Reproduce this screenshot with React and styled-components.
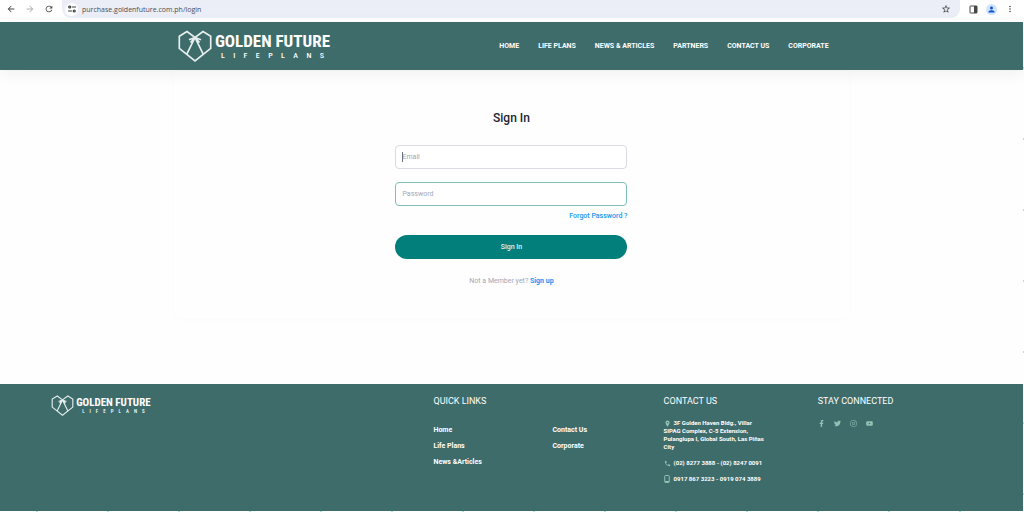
import React from 'react';
import styled, { createGlobalStyle } from 'styled-components';
import {
  MdArrowBack,
  MdArrowForward,
  MdRefresh,
  MdStarBorder,
  MdMoreVert,
  MdPerson,
  MdPhone,
  MdLocationOn,
} from 'react-icons/md';
import { FaFacebookF, FaTwitter, FaInstagram, FaYoutube } from 'react-icons/fa';

const navItems = ['Home', 'Life Plans', 'News & Articles', 'Partners', 'Contact Us', 'Corporate'];
const linkColumns = [
  ['Home', 'Life Plans', 'News &Articles'],
  ['Contact Us', 'Corporate'],
];
const socials = [
  { name: 'Facebook', Icon: FaFacebookF },
  { name: 'Twitter', Icon: FaTwitter },
  { name: 'Instagram', Icon: FaInstagram },
  { name: 'YouTube', Icon: FaYoutube },
];

const TuneIcon = () => (
  <svg width="8" height="8" viewBox="0 0 16 16" fill="none" stroke="#3c4043" strokeWidth="2.4">
    <circle cx="3.5" cy="4" r="2" />
    <path d="M8 4h8M0 12h8" />
    <circle cx="12.5" cy="12" r="2" />
  </svg>
);

const PanelIcon = () => (
  <svg width="9" height="9" viewBox="0 0 18 18">
    <rect x="2" y="2" width="14" height="14" rx="1" fill="none" stroke="#474747" strokeWidth="2" />
    <path d="M10 2h6v14h-6z" fill="#474747" />
  </svg>
);

const MobileIcon = () => (
  <svg width="6" height="8" viewBox="0 0 12 16" fill="none" stroke="currentColor" strokeWidth="2">
    <rect x="1.5" y="1" width="9" height="14" rx="1.5" />
    <path d="M2 13h8" />
  </svg>
);

const Logo = ({ small }) => (
  <LogoLink href="#home" aria-label="Golden Future Lifeplans" $small={small}>
    <LogoMark viewBox="0 0 34 32" $small={small}>
      <path d="M9 1.5 1.3 6.2v12.2L17 30.8l15.7-12.4V6.2L25 1.5l-8 6-8-6Z" />
      <path d="M17 7.5 8.8 24.2M17 7.5l8.2 16.7M17 7.5l-6 2.3M17 7.5l6 2.3M17 7.5l-4.5 5M17 7.5l4.5 5" />
    </LogoMark>
    <LogoWords $small={small}>
      <LogoName $small={small}>GOLDEN FUTURE</LogoName>
      <LogoSub $small={small}>
        {'LIFEPLANS'.split('').map((letter, i) => (
          <span key={i}>{letter}</span>
        ))}
      </LogoSub>
    </LogoWords>
  </LogoLink>
);

const App = () => {
  return (
    <>
      <GlobalStyle />
      <Page>
        <BrowserBar>
          <BarButton aria-label="Back"><MdArrowBack /></BarButton>
          <BarButton aria-label="Forward" $faded><MdArrowForward /></BarButton>
          <BarButton aria-label="Reload"><MdRefresh /></BarButton>
          <AddressBar>
            <SiteInfo aria-label="Site information"><TuneIcon /></SiteInfo>
            <Address aria-label="Address" defaultValue="purchase.goldenfuture.com.ph/login" />
            <BarButton aria-label="Bookmark"><MdStarBorder /></BarButton>
          </AddressBar>
          <BarButton aria-label="Side panel"><PanelIcon /></BarButton>
          <Avatar aria-label="Profile"><MdPerson /></Avatar>
          <BarButton aria-label="Menu"><MdMoreVert /></BarButton>
        </BrowserBar>

        <Header>
          <Logo />
          <Nav>
            {navItems.map((item) => (
              <NavLink key={item} href="#nav">{item}</NavLink>
            ))}
          </Nav>
        </Header>

        <Main>
          <Card>
            <Form onSubmit={(e) => e.preventDefault()}>
              <Title>Sign In</Title>
              <Field $caret>
                <Input type="email" placeholder="Email" aria-label="Email" />
              </Field>
              <Field>
                <Input type="password" placeholder="Password" aria-label="Password" $active />
              </Field>
              <Forgot href="#forgot">Forgot Password ?</Forgot>
              <Submit type="submit">Sign In</Submit>
              <SignUp>
                Not a Member yet? <BlueLink href="#signup">Sign up</BlueLink>
              </SignUp>
            </Form>
          </Card>
        </Main>

        <Footer>
          <Logo small />
          <section>
            <FooterTitle>QUICK LINKS</FooterTitle>
            <LinkColumns>
              {linkColumns.map((links) => (
                <LinkList key={links[0]}>
                  {links.map((link) => (
                    <li key={link}><FooterLink href="#link">{link}</FooterLink></li>
                  ))}
                </LinkList>
              ))}
            </LinkColumns>
          </section>
          <section>
            <FooterTitle>CONTACT US</FooterTitle>
            <ContactText>
              <ContactIcon><MdLocationOn /></ContactIcon>
              3F Golden Haven Bldg., Villar<br />
              SIPAG Complex, C-5 Extension,<br />
              Pulanglupa I, Global South, Las Piñas<br />
              City
            </ContactText>
            <ContactText>
              <ContactIcon><MdPhone /></ContactIcon>
              (02) 8277 3888 - (02) 8247 0091
            </ContactText>
            <ContactText>
              <ContactIcon><MobileIcon /></ContactIcon>
              0917 867 3223 - 0919 074 3889
            </ContactText>
          </section>
          <section>
            <FooterTitle>STAY CONNECTED</FooterTitle>
            <Socials>
              {socials.map(({ name, Icon }) => (
                <a key={name} href="#social" aria-label={name}><Icon /></a>
              ))}
            </Socials>
          </section>
        </Footer>
      </Page>
    </>
  );
};

const GlobalStyle = createGlobalStyle`
  * {
    box-sizing: border-box;
  }
  body {
    margin: 0;
    background: #fefefe;
    font-family: Roboto, 'Liberation Sans', sans-serif;
    font-size: 7px;
  }
  button, input {
    font: inherit;
  }
  a {
    color: inherit;
    text-decoration: none;
  }
  svg {
    display: block;
  }
`;

/* small cyan ticks run along the right and bottom edges */
const Page = styled.div`
  display: flex;
  flex-direction: column;
  min-height: 100vh;
  padding: 0 1px 1px 0;
  background:
    repeating-linear-gradient(to bottom, transparent 0 67px, #a5e6e6 67px 69px, transparent 69px 71px) right top / 1px 100% no-repeat,
    repeating-linear-gradient(to right, transparent 0 36px, #a5e6e6 36px 38px, transparent 38px 71px) left bottom / 100% 1px no-repeat;
`;

const BrowserBar = styled.div`
  display: flex;
  align-items: center;
  gap: 7px;
  height: 22px;
  padding: 0 7px 4px 5px;
  background: white;
`;

const BarButton = styled.button`
  display: grid;
  place-items: center;
  width: 12px;
  height: 12px;
  padding: 0;
  border: 0;
  background: none;
  color: ${({ $faded }) => ($faded ? '#b0b0b0' : '#474747')};
  font-size: 10px;
`;

const AddressBar = styled.div`
  display: flex;
  flex: 1;
  align-items: center;
  height: 18px;
  padding: 0 8px 0 3px;
  border-radius: 0 0 9px 9px;
  background: #ebeef7;
`;

const SiteInfo = styled(BarButton)`
  width: 13px;
  height: 13px;
  border-radius: 50%;
  background: white;
`;

const Address = styled.input`
  flex: 1;
  min-width: 0;
  padding: 0 4px;
  border: 0;
  background: none;
  color: #4a4d52;
  font-family: 'Open Sans', sans-serif;
  font-size: 7px;
`;

const Avatar = styled(BarButton)`
  width: 11px;
  height: 11px;
  border-radius: 50%;
  background: #d3e3fd;
  color: #0b57d0;
  font-size: 9px;
`;

const Header = styled.header`
  display: flex;
  align-items: center;
  justify-content: space-between;
  height: 48px;
  padding: 0 19% 0 17%;
  background: #3e6c6b;
  box-shadow: 0 4px 16px rgba(0, 0, 0, 0.06);
`;

const LogoLink = styled.a`
  display: flex;
  align-items: center;
  align-self: ${({ $small }) => ($small ? 'flex-start' : 'center')};
  gap: ${({ $small }) => ($small ? '2px' : '3px')};
  margin-left: ${({ $small }) => ($small ? '0' : '4px')};
  color: white;
`;

const LogoMark = styled.svg`
  width: ${({ $small }) => ($small ? '23px' : '34px')};
  height: ${({ $small }) => ($small ? '21px' : '32px')};
  fill: none;
  stroke: #e6eeee;
  stroke-width: 1.7;
`;

const LogoWords = styled.span`
  display: flex;
  flex-direction: column;
  gap: ${({ $small }) => ($small ? '1px' : '2px')};
  padding-top: 1px;
`;

const LogoName = styled.span`
  font-family: 'Roboto Condensed', 'Liberation Sans Narrow', sans-serif;
  font-size: ${({ $small }) => ($small ? '11px' : '17px')};
  font-weight: 700;
  line-height: 1;
  white-space: nowrap;
`;

const LogoSub = styled.span`
  display: flex;
  justify-content: space-between;
  padding: 0 6px;
  font-family: 'Roboto Condensed', 'Liberation Sans Narrow', sans-serif;
  font-size: ${({ $small }) => ($small ? '5px' : '8px')};
  font-weight: 500;
  line-height: 1;
`;

const Nav = styled.nav`
  display: flex;
  gap: 19px;
`;

const NavLink = styled.a`
  color: white;
  font-weight: 700;
  text-transform: uppercase;
  white-space: nowrap;
`;

const Main = styled.main`
  flex: 1;
`;

const Card = styled.div`
  width: 66%;
  margin: 0 auto;
  padding: 41px 0 33px;
  border-radius: 8px;
  box-shadow: 0 0 6px rgba(0, 0, 0, 0.02);
`;

const Form = styled.form`
  display: flex;
  flex-direction: column;
  width: 232px;
  margin: 0 auto;
`;

const Title = styled.h1`
  margin: 0 0 19px;
  color: #212433;
  font-size: 12px;
  font-weight: 500;
  line-height: 15px;
  text-align: center;
`;

const Field = styled.div`
  position: relative;
  margin-bottom: 13px;

  &::before {
    content: '';
    display: ${({ $caret }) => ($caret ? 'block' : 'none')};
    position: absolute;
    top: 7px;
    left: 7px;
    width: 1px;
    height: 10px;
    background: #6e7182;
  }
`;

const Input = styled.input`
  display: block;
  width: 100%;
  height: 24px;
  padding: 0 6px;
  border: 1px solid ${({ $active }) => ($active ? '#7fbfbb' : '#d9dae2')};
  border-radius: 4px;
  background: white;
  color: #3f4254;
  outline: 0;

  &::placeholder {
    color: #a3a6b8;
  }
`;

const BlueLink = styled.a`
  color: #1595f5;
  font-weight: 700;
`;

const Forgot = styled(BlueLink)`
  align-self: flex-end;
  margin: -8px 0 14px;
  font-weight: 500;
  line-height: 10px;
`;

const Submit = styled.button`
  height: 24px;
  border: 0;
  border-radius: 12px;
  background: #037f7b;
  color: #e0f0ef;
  font-weight: 500;
`;

const SignUp = styled.p`
  margin: 17px 0 0;
  color: #a3a6b8;
  line-height: 10px;
  text-align: center;
`;

const Footer = styled.footer`
  display: grid;
  grid-template-columns: 382fr 230fr 154fr 154fr;
  min-height: 127px;
  padding: 11px 5% 20px;
  background: #3e6c6b;
  color: white;
`;

const FooterTitle = styled.h2`
  margin: 0 0 12px;
  font-size: 9px;
  font-weight: 400;
  line-height: 12px;
`;

const LinkColumns = styled.div`
  display: grid;
  grid-template-columns: 119fr 111fr;
  padding-top: 3px;
`;

const LinkList = styled.ul`
  margin: 0;
  padding: 0;
  line-height: 16px;
  list-style: none;
`;

const FooterLink = styled.a`
  font-weight: 700;
`;

const ContactText = styled.p`
  margin: 0 0 8px;
  font-size: 6px;
  font-weight: 700;
  line-height: 8px;
  white-space: nowrap;
`;

const ContactIcon = styled.span`
  display: inline-block;
  width: 10px;
  color: #8fc4b4;
  font-size: 7px;
  vertical-align: middle;
`;

const Socials = styled.div`
  display: flex;
  gap: 9px;
  padding-top: 1px;
  color: #8fc4b4;
  font-size: 7px;
`;

export default App;
